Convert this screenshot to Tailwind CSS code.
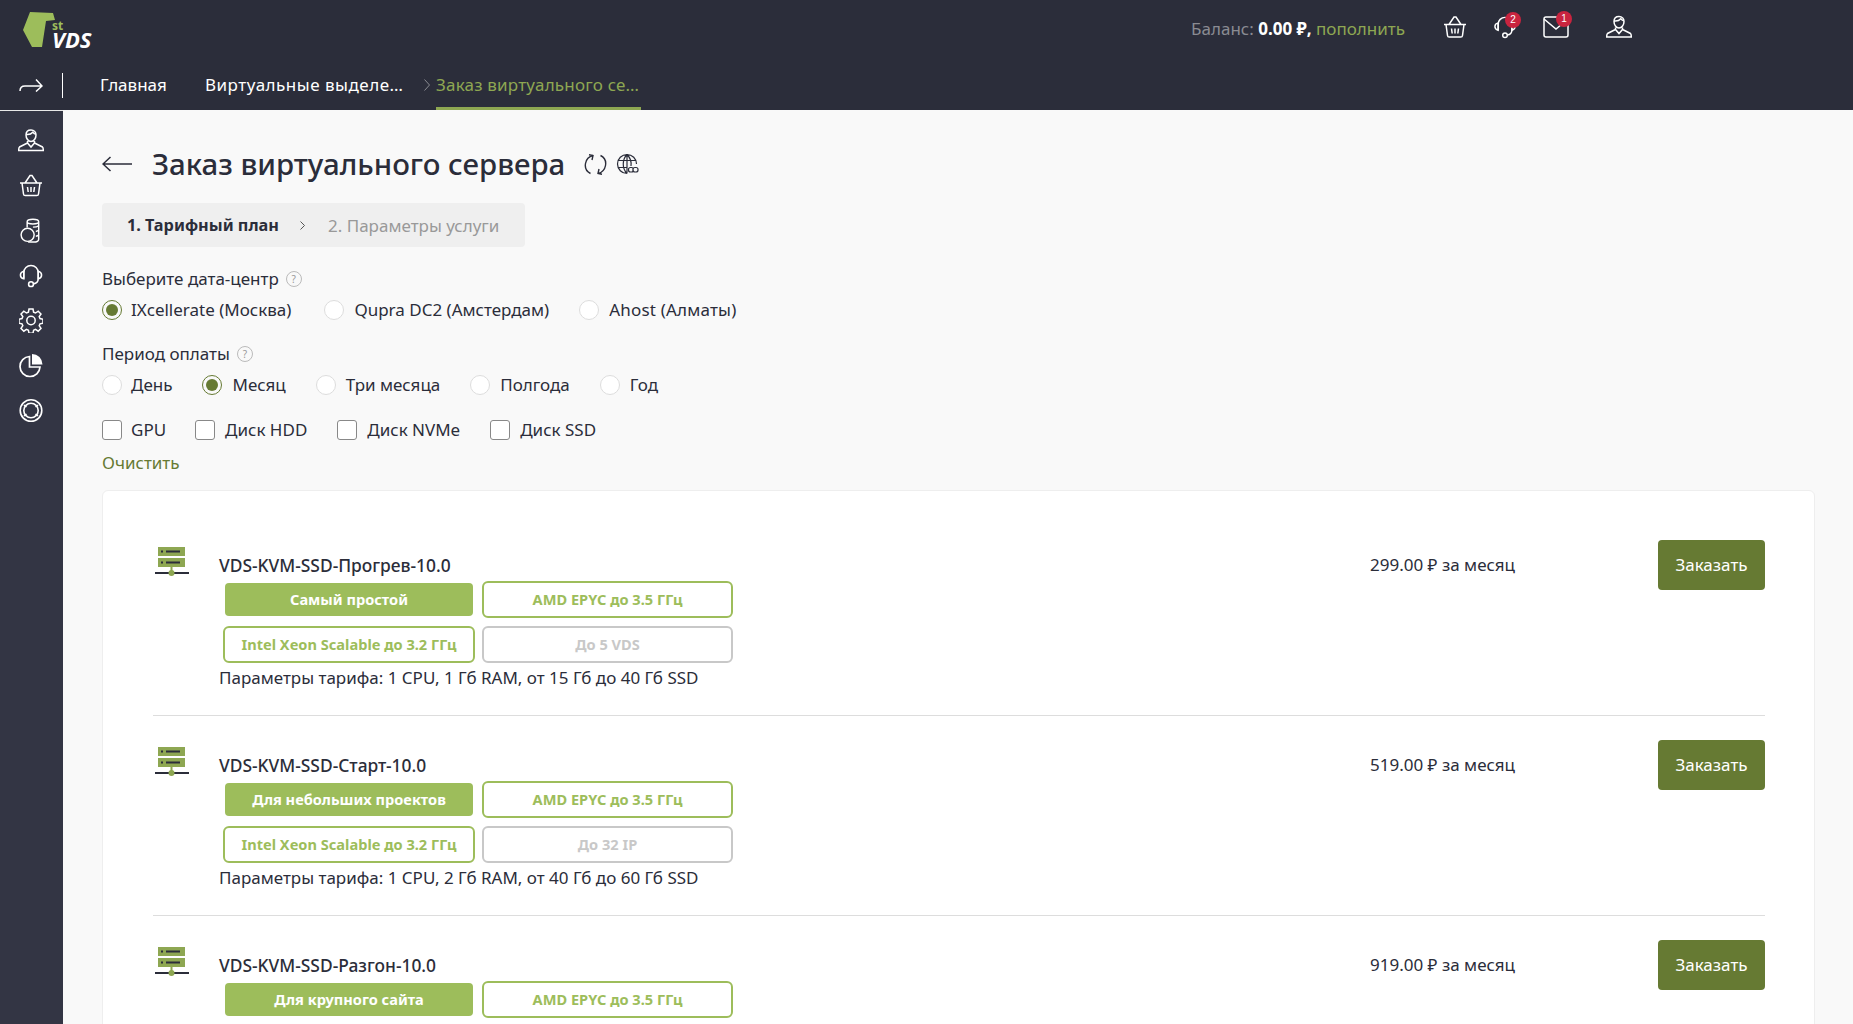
<!DOCTYPE html>
<html lang="ru">
<head>
  <meta charset="UTF-8">
  <title>Заказ виртуального сервера</title>
  <script src="https://cdn.jsdelivr.net/npm/@tailwindcss/browser@4"></script>
</head>
<body class="h-[1024px] overflow-hidden bg-[#f9f9f9] font-['Noto_Sans',sans-serif] text-[17px] text-[#2b2d3a]">
  <svg class="hidden">
    <symbol id="i-user" viewBox="0 0 26 24" fill="none" stroke="currentColor" stroke-width="1.5"><path d="M13 1.500c-3.200 0-5 2.200-5 5 0 3.400 2.200 6.500 5 6.500s5-3.100 5-6.500c0-2.800-1.800-5-5-5zM8.300 6c2.500.3 5-.5 6.500-2.300.6 1 1.500 1.800 2.900 2.200M9.500 12.500v2L1.500 18.500c-.6.500-.8 2-.8 3.500h24.600c0-1.500-.2-3-.8-3.500l-8-4v-2M9.500 14.500l3.500 4 3.500-4"/></symbol>
    <symbol id="i-basket" viewBox="0 0 24 24" fill="none" stroke="currentColor" stroke-width="1.5"><path d="M1 9.500h22M3 9.500l1.500 11c.1.900.8 1.500 1.700 1.500h11.600c.9 0 1.600-.6 1.700-1.500l1.500-11M6 9.500l5-7.500h2l5 7.500M8.500 13.500l.7 5M12 13.500v5M15.500 13.500l-.7 5"/></symbol>
    <symbol id="i-coins" viewBox="0 0 24 26" fill="none" stroke="currentColor" stroke-width="1.5"><path d="M8 10V4c0-3.500 12-3.500 12 0v18c0 2-2.500 3-5.500 3H9M8 4c0 3 12 3 12 0M14 9.500c2.500 0 4.500-.3 6-1.500M17 14c1.300-.2 2.300-.6 3-1.200M17 19c1.300-.2 2.300-.6 3-1.200"/><circle cx="8.500" cy="17.500" r="6.800"/></symbol>
    <symbol id="i-headset" viewBox="0 0 24 26" fill="none" stroke="currentColor" stroke-width="1.6"><path d="M4.500 16.500V10a7.500 7.500 0 0 1 15 0v6.500c0 2.500-2 4.800-5 5.200"/><path d="M4.500 8.500C2.500 9 1 10.500 1 12.500s1.500 3.500 3.500 4zM19.500 8.500c2 .5 3.500 2 3.500 4s-1.500 3.500-3.500 4z"/><circle cx="12" cy="22" r="2.500"/></symbol>
    <symbol id="i-gear" viewBox="0 0 24 24" fill="none" stroke="currentColor" stroke-width="1.5"><path d="M10 1h4l.6 3.200 1.900.8 2.700-1.800 2.800 2.800-1.800 2.700.8 1.900 3 .6v4l-3 .6-.8 1.900 1.800 2.700-2.800 2.800-2.700-1.800-1.900.8-.6 3h-4l-.6-3-1.900-.8-2.700 1.800-2.800-2.800 1.800-2.700-.8-1.900-3-.6v-4l3-.6.8-1.900-1.800-2.700 2.800-2.800 2.700 1.800 1.900-.8z" transform="translate(0 -.5)"/><circle cx="12" cy="12" r="4.200"/></symbol>
    <symbol id="i-pie" viewBox="0 0 24 24"><path d="M10.500 3a10 10 0 1 0 10.500 10.500H10.500z" fill="none" stroke="currentColor" stroke-width="1.7"/><path d="M13 .5A10.500 10.500 0 0 1 23.500 11H13z" fill="currentColor"/></symbol>
    <symbol id="i-ring" viewBox="0 0 24 24" fill="none" stroke="currentColor" stroke-width="1.6"><circle cx="12" cy="12" r="10.800"/><circle cx="12" cy="12" r="7.200"/><path d="M5 6.500l2.500 2M19 6.500l-2.500 2M5 17.500l2.500-2M19 17.500l-2.500-2"/></symbol>
    <symbol id="i-server" viewBox="0 0 34 31">
      <rect x="3" y="0" width="27" height="9" fill="#8ea752"/>
      <rect x="3" y="11" width="27" height="9" fill="#8ea752"/>
      <rect x="6" y="3.500" width="2" height="2" fill="#2b2d3a"/>
      <rect x="11" y="3.500" width="14" height="2" fill="#2b2d3a"/>
      <rect x="6" y="14.500" width="2" height="2" fill="#2b2d3a"/>
      <rect x="11" y="14.500" width="14" height="2" fill="#2b2d3a"/>
      <rect x="0" y="25" width="34" height="2" fill="#2b2d3a"/>
      <rect x="15.500" y="20" width="2" height="6" fill="#8ea752"/>
      <circle cx="16.500" cy="26" r="3" fill="#8ea752"/>
    </symbol>
  </svg>

  <!-- Header -->
  <header class="h-[110px] bg-[#2b2d3a] text-white flex flex-col">
    <div class="h-[60px] flex items-start">
      <div class="w-[120px]">
        <div class="relative w-[100px] h-[50px]">
          <svg class="absolute left-0 top-0" width="60" height="50" viewBox="0 0 60 50"><path d="M30 12l23 1 2 7-9 1-4 26H32L23 30z" fill="#9dbd5b"/></svg>
          <span class="absolute left-[52px] top-[20px] h-[11px] text-[12px] leading-[11px] font-bold text-[#9dbd5b]">st</span>
          <span class="absolute left-[52px] top-[31px] h-[17px] text-[22px] leading-[17px] font-bold italic text-white">VDS</span>
        </div>
      </div>
      <div class="flex-1 flex items-center justify-end h-[58px] pr-[221px]">
        <span class="text-[#8a8b92]">Баланс:&nbsp;</span><span class="font-bold">0.00 ₽,</span><span class="text-[#8ea752]">&nbsp;пополнить</span>
        <svg class="ml-[38px] mb-[5px] text-white" width="24" height="24"><use href="#i-basket"/></svg>
        <div class="relative ml-[27px] mb-[5px] w-[22px] h-[24px]">
          <svg class="text-white" width="22" height="24"><use href="#i-headset"/></svg>
          <span class="absolute -right-[5px] -top-[3px] w-4 h-4 rounded-full bg-[#c9243f] text-[10px] leading-4 text-center text-white font-['Liberation_Sans',sans-serif]">2</span>
        </div>
        <div class="relative ml-[27px] mb-[5px] w-[26px] h-[22px]">
          <svg class="text-white" width="26" height="22" viewBox="0 0 26 22" fill="none" stroke="currentColor" stroke-width="1.5"><rect x="1" y="1" width="24" height="20" rx="2"/><path d="M1 3l12 10 12-10"/></svg>
          <span class="absolute -right-[3px] -top-[5px] w-4 h-4 rounded-full bg-[#c9243f] text-[10px] leading-4 text-center text-white font-['Liberation_Sans',sans-serif]">1</span>
        </div>
        <svg class="ml-[37px] mb-[5px] text-white" width="26" height="24"><use href="#i-user"/></svg>
      </div>
    </div>
    <nav class="h-[50px] flex items-center relative">
      <svg class="ml-[19px]" width="24" height="14" viewBox="0 0 24 14" fill="none" stroke="white" stroke-width="1.5"><path d="M1 13c0-3 1.500-5 5-5h17M17 1.500l6 6.500-6 5.500"/></svg>
      <div class="ml-[19px] w-px h-[25px] bg-white"></div>
      <a class="ml-[37px] w-[105px]">Главная</a>
      <a class="w-[219px] whitespace-nowrap tracking-[0.5px]">Виртуальные выделе…</a>
      <span class="text-[#8a8b92] w-[12px]">
        <svg width="6" height="12" viewBox="0 0 6 12" fill="none" stroke="currentColor"><path d="M.5.500l5 5.500-5 5.500"/></svg>
      </span>
      <a class="w-[205px] h-[50px] leading-[50px] whitespace-nowrap tracking-[0.2px] text-[#8ea752] border-b-[3px] border-[#8ea752]">Заказ виртуального се…</a>
    </nav>
  </header>

  <div class="flex h-[914px]">
    <!-- Sidebar -->
    <aside class="w-[63px] bg-[#333544] border-t border-[#e8e8e8] text-white flex flex-col items-center pt-[17px] pr-[1px] gap-[20px]">
      <svg width="26" height="25"><use href="#i-user"/></svg>
      <svg width="24" height="25"><use href="#i-basket"/></svg>
      <svg width="24" height="25"><use href="#i-coins"/></svg>
      <svg width="24" height="25"><use href="#i-headset"/></svg>
      <svg width="24" height="25"><use href="#i-gear"/></svg>
      <svg width="24" height="25"><use href="#i-pie"/></svg>
      <svg width="24" height="25"><use href="#i-ring"/></svg>
    </aside>

    <main class="flex-1 pl-[39px] pr-[38px] overflow-hidden">
      <!-- Title -->
      <div class="flex items-center h-[40px] mt-[34px]">
        <svg width="30" height="16" viewBox="0 0 30 16" fill="none" stroke="#2b2d3a" stroke-width="1.5"><path d="M30 8H1M8.500 1L1 8l7.500 7"/></svg>
        <h1 class="ml-[20px] text-[29.4px] font-medium whitespace-nowrap">Заказ виртуального сервера</h1>
        <svg class="ml-[19px] text-[#2b2d3a]" width="23" height="21" viewBox="0 0 23 21" fill="none" stroke="currentColor" stroke-width="1.4"><path d="M6.500 19.500C2.500 17.500.8 13.500 1.500 9.500 2.200 5.500 5 2.500 9 1.500M5 .8L9 1.500 8 6M16.500 1.500c4 2 5.700 6 5 10-.7 4-3.500 7-7.500 8M18 20.200l-4-.7 1-4.500"/></svg>
        <svg class="ml-[9px] text-[#2b2d3a]" width="23" height="23" viewBox="0 0 23 23" fill="none" stroke="currentColor" stroke-width="1.2"><path d="M11 20.500a9.500 9.500 0 1 1 9.500-9.500M11 1.500c-5 5-5 14 0 19M11 1.500c3.500 3.500 4.500 8 4 11.500M2 7.500h18M2 14.500h9M11 1.500v19"/><rect x="12.500" y="14.500" width="5" height="4.500" rx="2" fill="#f9f9f9"/><rect x="17" y="14.500" width="5" height="4.500" rx="2" fill="#f9f9f9"/></svg>
      </div>

      <!-- Steps -->
      <div class="mt-[19px] w-[423px] h-[44px] bg-[#efefef] rounded flex items-center pl-[25px] pt-[1px]">
        <span class="font-bold text-[16.3px]">1. Тарифный план</span>
        <svg class="ml-[21px]" width="5" height="9" viewBox="0 0 5 9" fill="none" stroke="#555"><path d="M.5.500l4 4-4 4"/></svg>
        <span class="ml-[23px] text-[#999]">2. Параметры услуги</span>
      </div>

      <!-- Datacenter -->
      <div class="mt-[20px] h-[24px] flex items-center pb-[1px]">
        <span>Выберите дата-центр</span>
        <span class="ml-[7px] w-4 h-4 rounded-full border border-[#bbb] text-[10px] leading-[14px] text-center text-[#999]">?</span>
      </div>
      <div class="mt-[7px] h-[24px] flex items-center">
        <span class="w-5 h-5 rounded-full border border-[#667a33] flex items-center justify-center"><span class="w-3 h-3 rounded-full bg-[#667a33]"></span></span>
        <span class="ml-[9px]">IXcellerate (Москва)</span>
        <span class="ml-[33px] w-5 h-5 rounded-full border border-[#ddd] bg-white"></span>
        <span class="ml-[10px]">Qupra DC2 (Амстердам)</span>
        <span class="ml-[30px] w-5 h-5 rounded-full border border-[#ddd] bg-white"></span>
        <span class="ml-[10px] tracking-[0.2px]">Ahost (Алматы)</span>
      </div>

      <!-- Period -->
      <div class="mt-[20px] h-[24px] flex items-center">
        <span>Период оплаты</span>
        <span class="ml-[7px] w-4 h-4 rounded-full border border-[#bbb] text-[10px] leading-[14px] text-center text-[#999]">?</span>
      </div>
      <div class="mt-[7px] h-[24px] flex items-center">
        <span class="w-5 h-5 rounded-full border border-[#ddd] bg-white"></span>
        <span class="ml-[9px]">День</span>
        <span class="ml-[30px] w-5 h-5 rounded-full border border-[#667a33] flex items-center justify-center"><span class="w-3 h-3 rounded-full bg-[#667a33]"></span></span>
        <span class="ml-[10px]">Месяц</span>
        <span class="ml-[30px] w-5 h-5 rounded-full border border-[#ddd] bg-white"></span>
        <span class="ml-[10px]">Три месяца</span>
        <span class="ml-[30px] w-5 h-5 rounded-full border border-[#ddd] bg-white"></span>
        <span class="ml-[10px]">Полгода</span>
        <span class="ml-[30px] w-5 h-5 rounded-full border border-[#ddd] bg-white"></span>
        <span class="ml-[10px]">Год</span>
      </div>

      <!-- Filters -->
      <div class="mt-[21px] h-[24px] flex items-center">
        <span class="w-5 h-5 rounded-[3px] border border-[#888] bg-white"></span>
        <span class="ml-[9px]">GPU</span>
        <span class="ml-[29px] w-5 h-5 rounded-[3px] border border-[#888] bg-white"></span>
        <span class="ml-[10px]">Диск HDD</span>
        <span class="ml-[30px] w-5 h-5 rounded-[3px] border border-[#888] bg-white"></span>
        <span class="ml-[10px]">Диск NVMe</span>
        <span class="ml-[30px] w-5 h-5 rounded-[3px] border border-[#888] bg-white"></span>
        <span class="ml-[10px]">Диск SSD</span>
      </div>
      <div class="mt-[9px] h-[24px] leading-[24px] text-[#667a33]">Очистить</div>

      <!-- Tariffs -->
      <div class="mt-[15px] h-[600px] bg-white border border-[#eee] rounded-md pl-[50px] pr-[49px] pt-[49px]">
        <article class="h-[176px] mb-[24px] border-b border-[#ddd] flex items-start">
          <svg class="ml-[2px] mt-[7px] shrink-0" width="34" height="31"><use href="#i-server"/></svg>
          <div class="ml-[30px] flex-1 pt-[13px]">
            <div class="leading-[24px] font-medium text-[17.4px]">VDS-KVM-SSD-Прогрев-10.0</div>
            <div class="mt-[4px] ml-[4px] grid grid-cols-[252px_251px] gap-x-[7px] gap-y-[8px] text-[14.6px] font-bold">
              <div class="h-[37px] flex items-center justify-center rounded-md border-2 border-transparent bg-clip-padding bg-[#9dbd5b] text-white">Самый простой</div>
              <div class="h-[37px] flex items-center justify-center rounded-md border-2 border-[#9dbd5b] text-[#9dbd5b]">AMD EPYC до 3.5 ГГц</div>
              <div class="h-[37px] flex items-center justify-center rounded-md border-2 border-[#9dbd5b] text-[#9dbd5b]">Intel Xeon Scalable до 3.2 ГГц</div>
              <div class="h-[37px] flex items-center justify-center rounded-md border-2 border-[#c8c8c8] text-[#c8c8c8]">До 5 VDS</div>
            </div>
            <div class="mt-[3px] leading-[24px]">Параметры тарифа: 1 CPU, 1 Гб RAM, от 15 Гб до 40 Гб SSD</div>
          </div>
          <div class="w-[288px] pt-[13px] leading-[24px]">299.00 ₽ за месяц</div>
          <button class="w-[107px] h-[50px] bg-[#667a33] text-white rounded">Заказать</button>
        </article>

        <article class="h-[176px] mb-[24px] border-b border-[#ddd] flex items-start">
          <svg class="ml-[2px] mt-[7px] shrink-0" width="34" height="31"><use href="#i-server"/></svg>
          <div class="ml-[30px] flex-1 pt-[13px]">
            <div class="leading-[24px] font-medium text-[17.4px]">VDS-KVM-SSD-Старт-10.0</div>
            <div class="mt-[4px] ml-[4px] grid grid-cols-[252px_251px] gap-x-[7px] gap-y-[8px] text-[14.6px] font-bold">
              <div class="h-[37px] flex items-center justify-center rounded-md border-2 border-transparent bg-clip-padding bg-[#9dbd5b] text-white">Для небольших проектов</div>
              <div class="h-[37px] flex items-center justify-center rounded-md border-2 border-[#9dbd5b] text-[#9dbd5b]">AMD EPYC до 3.5 ГГц</div>
              <div class="h-[37px] flex items-center justify-center rounded-md border-2 border-[#9dbd5b] text-[#9dbd5b]">Intel Xeon Scalable до 3.2 ГГц</div>
              <div class="h-[37px] flex items-center justify-center rounded-md border-2 border-[#c8c8c8] text-[#c8c8c8]">До 32 IP</div>
            </div>
            <div class="mt-[3px] leading-[24px]">Параметры тарифа: 1 CPU, 2 Гб RAM, от 40 Гб до 60 Гб SSD</div>
          </div>
          <div class="w-[288px] pt-[13px] leading-[24px]">519.00 ₽ за месяц</div>
          <button class="w-[107px] h-[50px] bg-[#667a33] text-white rounded">Заказать</button>
        </article>

        <article class="h-[176px] flex items-start">
          <svg class="ml-[2px] mt-[7px] shrink-0" width="34" height="31"><use href="#i-server"/></svg>
          <div class="ml-[30px] flex-1 pt-[13px]">
            <div class="leading-[24px] font-medium text-[17.4px]">VDS-KVM-SSD-Разгон-10.0</div>
            <div class="mt-[4px] ml-[4px] grid grid-cols-[252px_251px] gap-x-[7px] gap-y-[8px] text-[14.6px] font-bold">
              <div class="h-[37px] flex items-center justify-center rounded-md border-2 border-transparent bg-clip-padding bg-[#9dbd5b] text-white">Для крупного сайта</div>
              <div class="h-[37px] flex items-center justify-center rounded-md border-2 border-[#9dbd5b] text-[#9dbd5b]">AMD EPYC до 3.5 ГГц</div>
            </div>
          </div>
          <div class="w-[288px] pt-[13px] leading-[24px]">919.00 ₽ за месяц</div>
          <button class="w-[107px] h-[50px] bg-[#667a33] text-white rounded">Заказать</button>
        </article>
      </div>
    </main>
  </div>
</body>
</html>
